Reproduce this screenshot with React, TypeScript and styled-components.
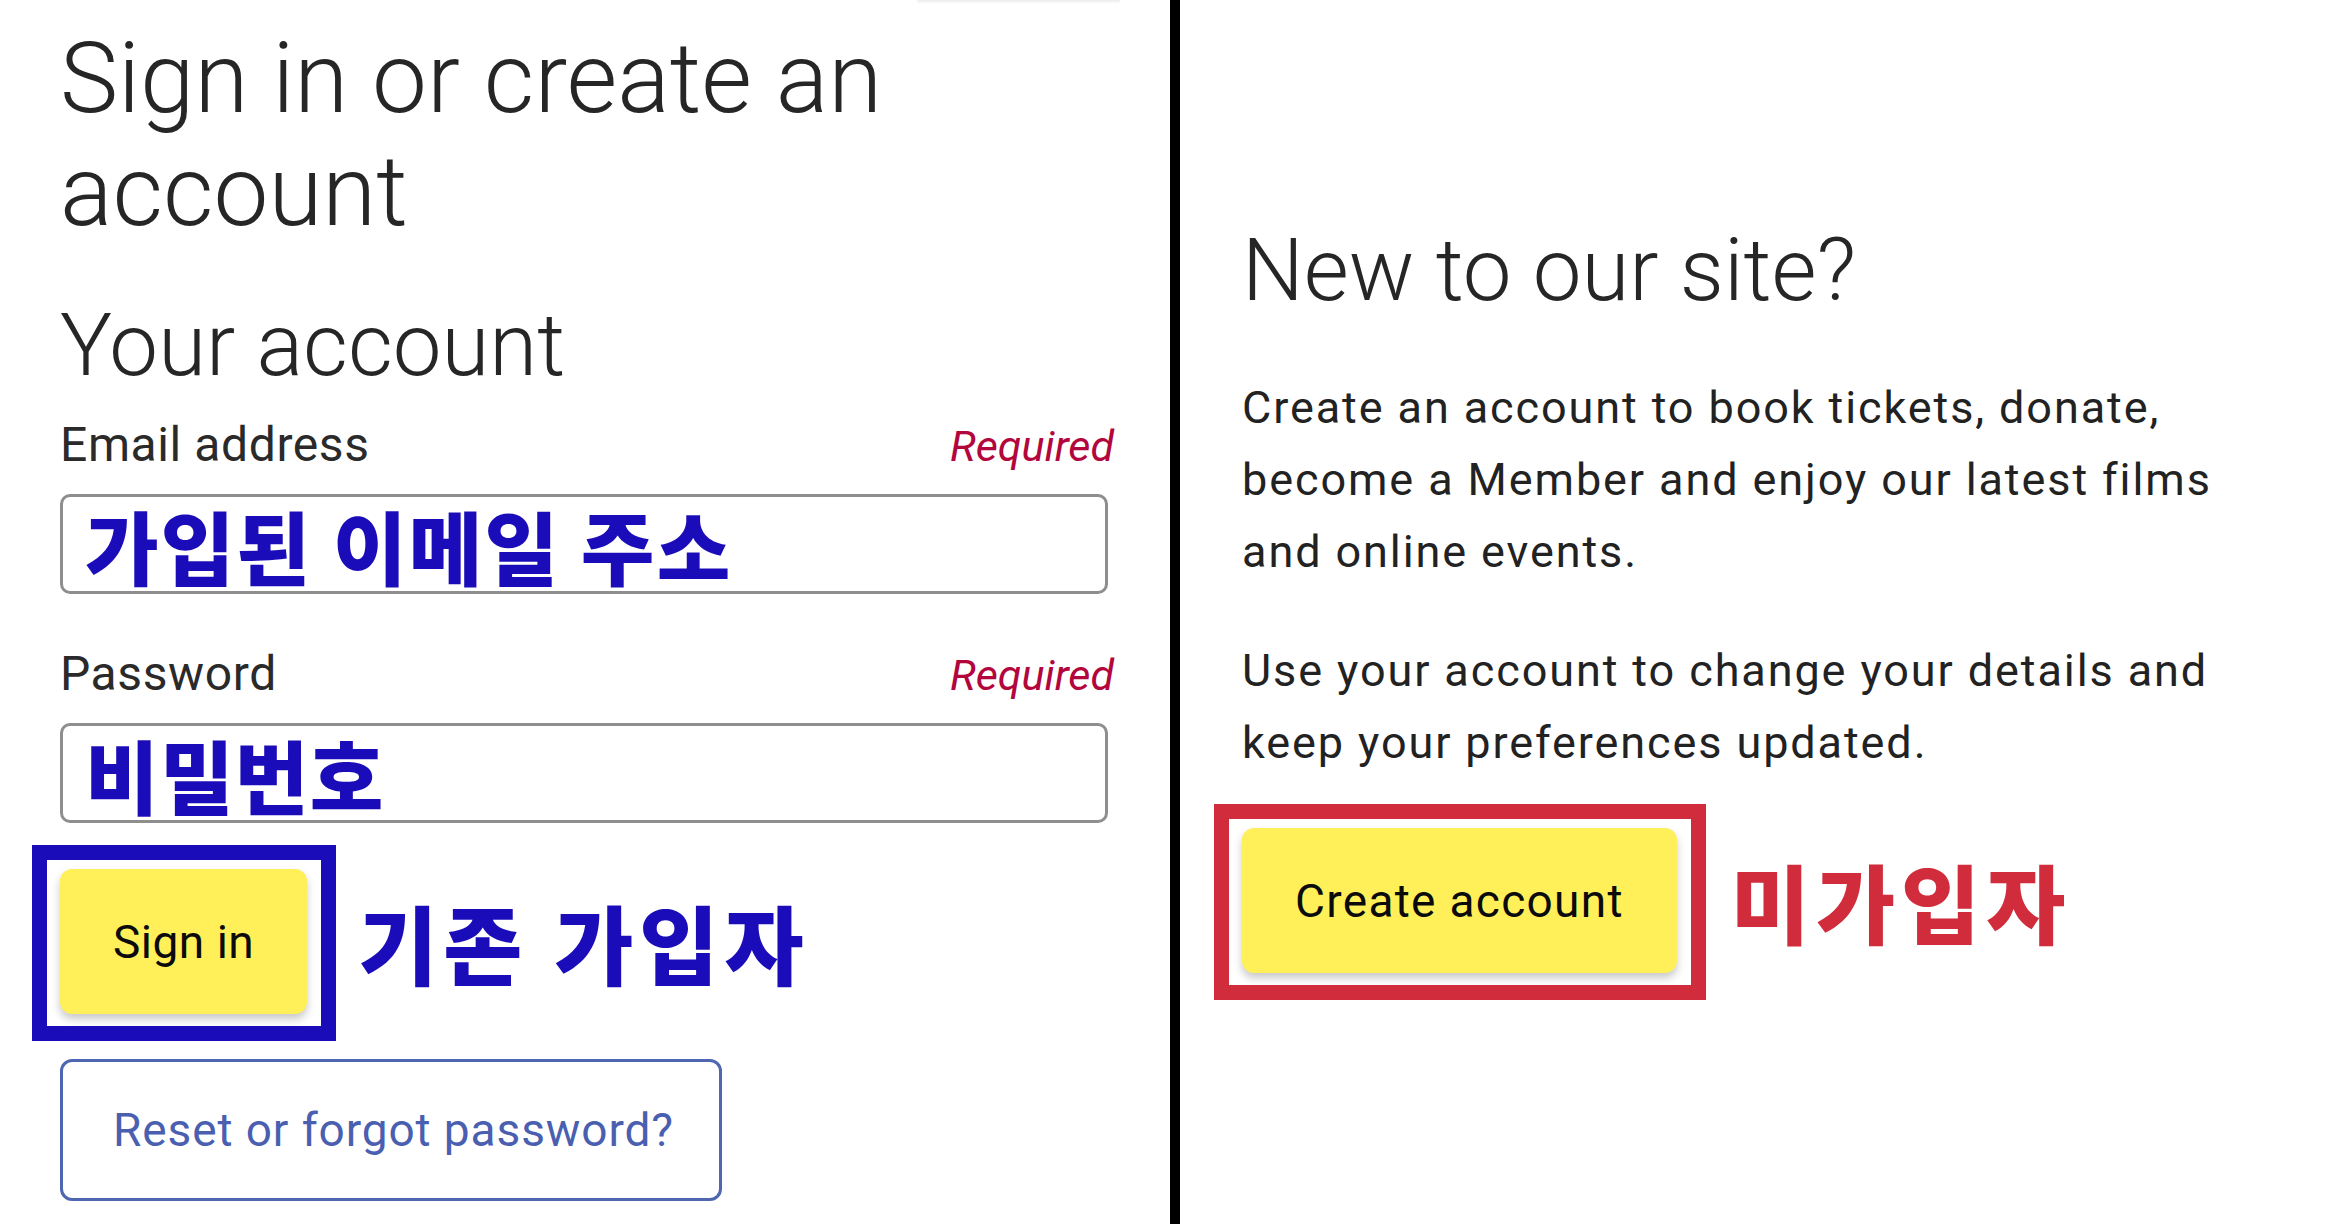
import React from "react";
import styled, { createGlobalStyle } from "styled-components";

const Global = createGlobalStyle`
  html, body { margin: 0; padding: 0; background: #ffffff; }
  body { font-family: Roboto, "Noto Sans", "Liberation Sans", sans-serif; color: #232323; }
  * { box-sizing: border-box; }
`;

const Page = styled.div`
  display: grid;
  grid-template-columns: 1170px 10px 1fr;
  width: 2350px;
  height: 1224px;
  overflow: hidden;
  background: #fff;
`;

const Divider = styled.div`
  background: #000;
`;

const Pane = styled.section<{ $pad: number }>`
  display: flex;
  flex-direction: column;
  align-items: flex-start;
  padding-left: ${(p) => p.$pad}px;
`;

const TopShadow = styled.div`
  width: 203px;
  height: 4px;
  margin-left: 857px;
  border-radius: 0 0 8px 8px;
  background: linear-gradient(to bottom, #ececec, rgba(255, 255, 255, 0));
`;

const Title = styled.h1`
  margin: 18px 0 0;
  max-width: 1050px;
  font-family: Roboto, "Noto Sans", sans-serif;
  font-weight: 300;
  font-size: 98px;
  line-height: 113px;
  color: #262626;
`;

const SubTitle = styled.h2<{ $top: number }>`
  margin: ${(p) => p.$top}px 0 0;
  font-family: Roboto, "Noto Sans", sans-serif;
  font-weight: 300;
  font-size: 87px;
  line-height: 100px;
  color: #262626;
`;

const Form = styled.div`
  width: 1050px;
  display: flex;
  flex-direction: column;
`;

const LabelRow = styled.div<{ $top: number }>`
  display: flex;
  justify-content: space-between;
  align-items: baseline;
  margin-top: ${(p) => p.$top}px;
  line-height: 56px;
`;

const Label = styled.span`
  font-size: 48px;
  font-weight: 400;
  letter-spacing: 0.6px;
  color: #2a2a2a;
`;

const Required = styled.span`
  font-size: 43px;
  font-style: italic;
  color: #b2063d;
  margin-right: -4px;
`;

const Field = styled.div`
  margin-top: 20px;
  width: 1048px;
  height: 100px;
  border: 3px solid #8e8e8e;
  border-radius: 10px;
  display: flex;
  align-items: center;
  padding-left: 22px;
  background: #fff;
`;

const Scribble = styled.span<{ $color: string; $size: number; $spacing: number }>`
  font-family: "Noto Sans CJK KR", "Noto Sans", sans-serif;
  font-weight: 900;
  font-size: ${(p) => p.$size}px;
  letter-spacing: ${(p) => p.$spacing}px;
  line-height: 1;
  color: ${(p) => p.$color};
  white-space: nowrap;
`;

const ActionRow = styled.div<{ $top: number; $gap: number }>`
  display: flex;
  align-items: center;
  gap: ${(p) => p.$gap}px;
  margin-top: ${(p) => p.$top}px;
`;

const Highlight = styled.div<{ $color: string }>`
  position: relative;
  display: flex;
  &::before {
    content: "";
    position: absolute;
    top: -24px;
    left: -28px;
    right: -29px;
    bottom: -27px;
    border: 15px solid ${(p) => p.$color};
    pointer-events: none;
  }
`;

const PrimaryButton = styled.button<{ $tracking: number }>`
  height: 145px;
  padding: 0 53px;
  border: none;
  border-radius: 12px;
  background: #fff05a;
  box-shadow: 0 5px 8px rgba(0, 0, 0, 0.22);
  font-family: Roboto, "Noto Sans", sans-serif;
  font-size: 46px;
  font-weight: 400;
  letter-spacing: ${(p) => p.$tracking}px;
  color: #0b0b0b;
  cursor: pointer;
`;

const OutlineButton = styled.button`
  margin-top: 45px;
  width: 662px;
  height: 142px;
  padding: 0 0 0 50px;
  text-align: left;
  border: 3px solid #4f67b1;
  border-radius: 12px;
  background: #fff;
  font-family: Roboto, "Noto Sans", sans-serif;
  font-size: 46px;
  letter-spacing: 0.9px;
  color: #4a5fb0;
  cursor: pointer;
`;

const Paragraph = styled.p<{ $top: number }>`
  margin: ${(p) => p.$top}px 0 0;
  max-width: 1010px;
  font-family: Roboto, "Noto Sans", sans-serif;
  font-size: 45px;
  line-height: 72px;
  letter-spacing: 1.9px;
  color: #222;
`;

export default function App() {
  return (
    <>
      <Global />
      <Page>
        <Pane $pad={60}>
          <TopShadow />
          <Title>Sign in or create an account</Title>
          <SubTitle $top={47}>Your account</SubTitle>
          <Form>
            <LabelRow $top={22}>
              <Label>Email address</Label>
              <Required>Required</Required>
            </LabelRow>
            <Field>
              <Scribble $color="#1a0cb8" $size={80} $spacing={2.2}>가입된 이메일 주소</Scribble>
            </Field>
            <LabelRow $top={52}>
              <Label>Password</Label>
              <Required>Required</Required>
            </LabelRow>
            <Field>
              <Scribble $color="#1a0cb8" $size={80} $spacing={1.3}>비밀번호</Scribble>
            </Field>
          </Form>
          <ActionRow $top={46} $gap={51}>
            <Highlight $color="#1a0cb8">
              <PrimaryButton $tracking={0.5}>Sign in</PrimaryButton>
            </Highlight>
            <Scribble $color="#1a0cb8" $size={86} $spacing={6}>기존 가입자</Scribble>
          </ActionRow>
          <OutlineButton>Reset or forgot password?</OutlineButton>
        </Pane>
        <Divider />
        <Pane $pad={62}>
          <SubTitle $top={220}>New to our site?</SubTitle>
          <Paragraph $top={52}>
            Create an account to book tickets, donate, become a Member and enjoy our latest films and online events.
          </Paragraph>
          <Paragraph $top={47}>
            Use your account to change your details and keep your preferences updated.
          </Paragraph>
          <ActionRow $top={49} $gap={54}>
            <Highlight $color="#d12c3c">
              <PrimaryButton $tracking={1.3}>Create account</PrimaryButton>
            </Highlight>
            <Scribble $color="#d12c3c" $size={86} $spacing={6}>미가입자</Scribble>
          </ActionRow>
        </Pane>
      </Page>
    </>
  );
}
